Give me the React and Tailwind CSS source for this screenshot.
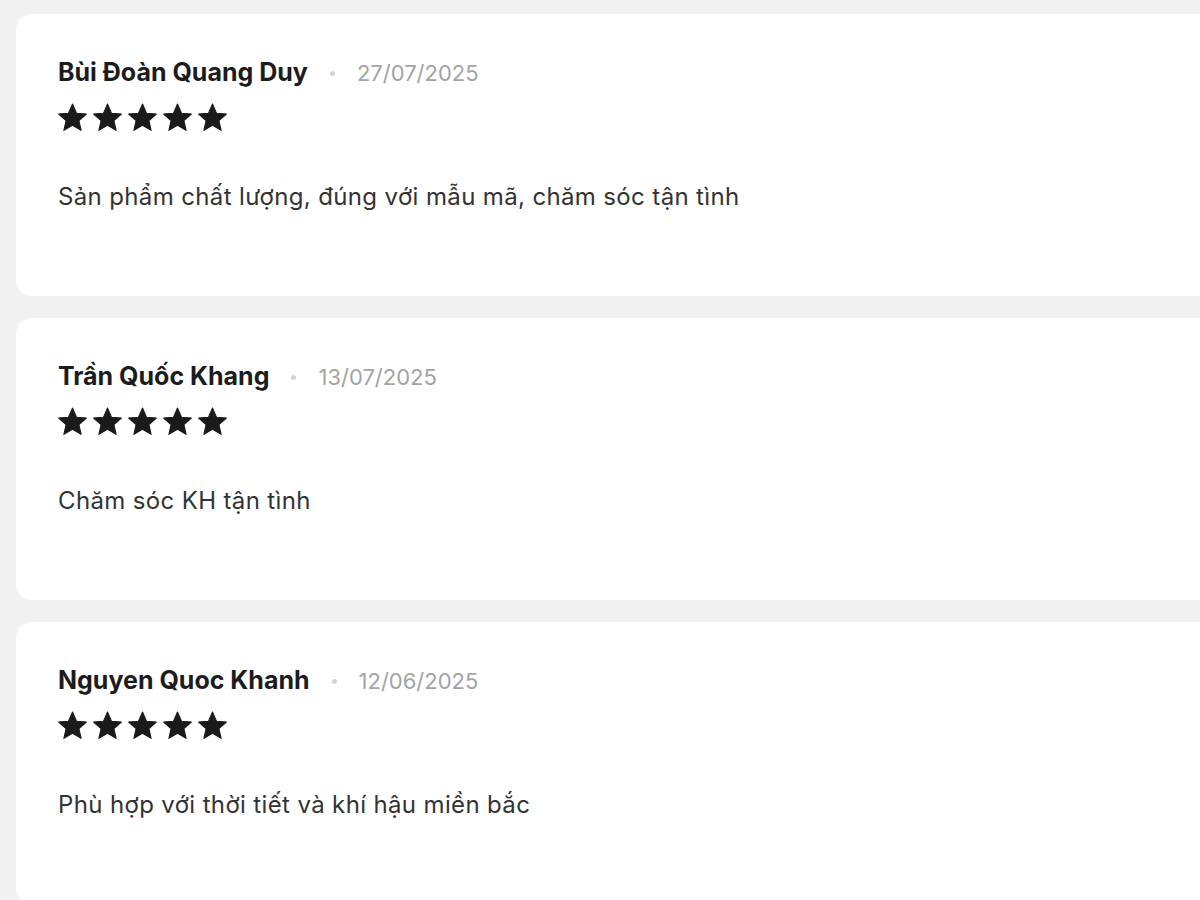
import React from "react";

const reviews = [
  { name: "Bùi Đoàn Quang Duy", date: "27/07/2025", text: "Sản phẩm chất lượng, đúng với mẫu mã, chăm sóc tận tình" },
  { name: "Trần Quốc Khang", date: "13/07/2025", text: "Chăm sóc KH tận tình" },
  { name: "Nguyen Quoc Khanh", date: "12/06/2025", text: "Phù hợp với thời tiết và khí hậu miền bắc" },
];

function Star() {
  return (
    <svg viewBox="1 1 22 22" className="w-[29px] h-[29px]" fill="#1a1a1a">
      <path d="M12 1.8l3.05 6.9 7.5.7-5.67 5 1.66 7.37L12 17.9l-6.54 3.87 1.66-7.37-5.67-5 7.5-.7z" strokeLinejoin="round" stroke="#1a1a1a" strokeWidth="0.8" />
    </svg>
  );
}

function ReviewCard({ review }) {
  return (
    <div className="w-[1220px] h-[282px] shrink-0 bg-white rounded-2xl pl-[42px] pt-[44px]">
      <div className="flex items-center h-[30px]">
        <span className="text-[25px] font-bold text-[#1c1c1c]">{review.name}</span>
        <span className="mx-[22px] w-[5px] h-[5px] rounded-full bg-[#d4d4d4]" />
        <span className="text-[22px] text-[#a3a3a3]">{review.date}</span>
      </div>
      <div className="flex gap-[6px] mt-[15px]">
        {[0, 1, 2, 3, 4].map((i) => (
          <Star key={i} />
        ))}
      </div>
      <p className="mt-[50px] text-[24px] leading-[30px] tracking-[0.015em] text-[#333333]">{review.text}</p>
    </div>
  );
}

export default function App() {
  return (
    <div className="h-[900px] overflow-hidden bg-[#f1f1f1] font-['Inter',sans-serif]">
      <div className="flex flex-col gap-[22px] pl-4 pt-[14px]">
        {reviews.map((r) => (
          <ReviewCard key={r.name} review={r} />
        ))}
      </div>
    </div>
  );
}
